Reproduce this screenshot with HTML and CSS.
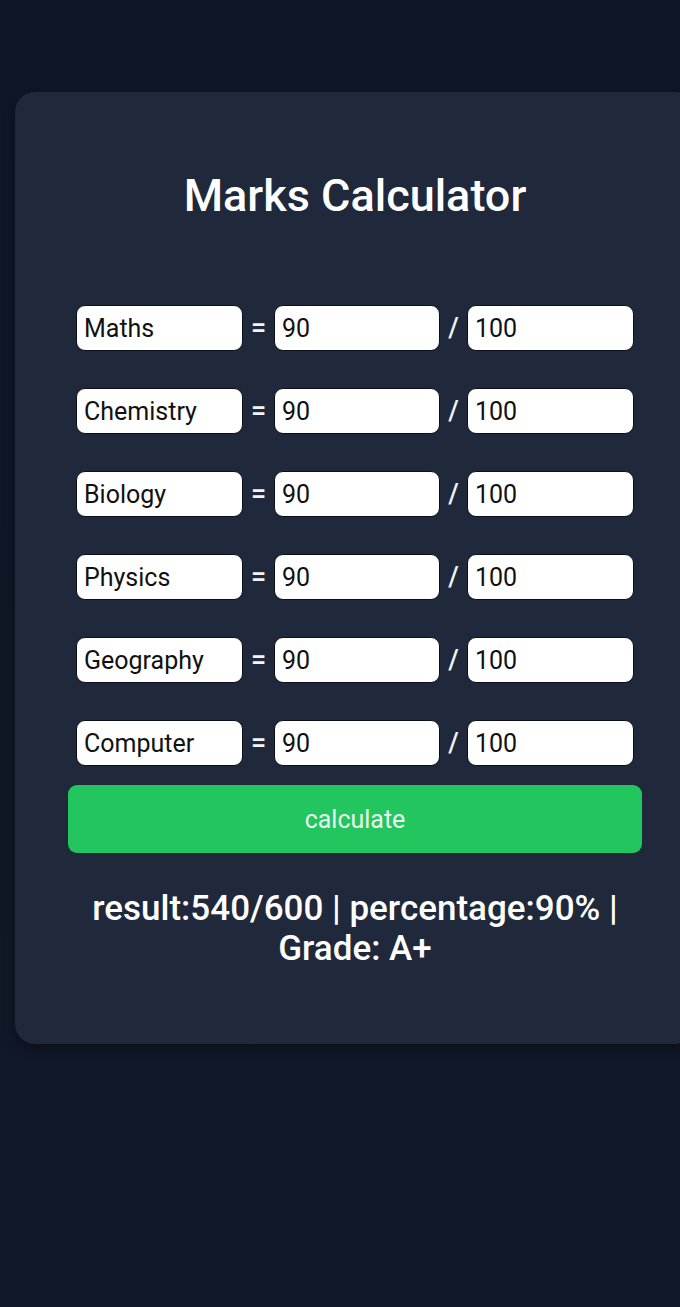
FILE: index.html
```html
<!DOCTYPE html>
<html lang="en">
<head>
<meta charset="utf-8">
<title>Marks Calculator</title>
<link rel="stylesheet" href="styles.css">
</head>
<body>
<main class="card">
  <h1 class="title">Marks Calculator</h1>
  <div class="rows">
    <div class="row"><input class="field" value="Maths"><span class="op">=</span><input class="field" value="90"><span class="op">/</span><input class="field" value="100"></div>
    <div class="row"><input class="field" value="Chemistry"><span class="op">=</span><input class="field" value="90"><span class="op">/</span><input class="field" value="100"></div>
    <div class="row"><input class="field" value="Biology"><span class="op">=</span><input class="field" value="90"><span class="op">/</span><input class="field" value="100"></div>
    <div class="row"><input class="field" value="Physics"><span class="op">=</span><input class="field" value="90"><span class="op">/</span><input class="field" value="100"></div>
    <div class="row"><input class="field" value="Geography"><span class="op">=</span><input class="field" value="90"><span class="op">/</span><input class="field" value="100"></div>
    <div class="row"><input class="field" value="Computer"><span class="op">=</span><input class="field" value="90"><span class="op">/</span><input class="field" value="100"></div>
  </div>
  <button class="calc">calculate</button>
  <p class="result">result:540/600 | percentage:90% | Grade: A+</p>
</main>
</body>
</html>
```

FILE: styles.css
```css
html, body {
  margin: 0;
  padding: 0;
}
body {
  background: linear-gradient(#0f1628, #111827);
  min-height: 1307px;
  overflow: hidden;
  font-family: Roboto, "Liberation Sans", sans-serif;
  padding-top: 92px;
  box-sizing: border-box;
}
.card {
  margin-left: 15px;
  width: 680px;
  box-sizing: border-box;
  background: #1f293b;
  border-radius: 20px;
  padding: 0 53px 0;
  height: 952px;
  box-shadow: 0 4px 12px rgba(0,0,0,0.35);
  display: flex;
  flex-direction: column;
}
.title {
  margin: 0;
  padding-top: 74px;
  font-size: 45px;
  line-height: 60px;
  font-weight: 500;
  color: #ffffff;
  text-align: center;
}
.rows {
  margin: 79px 8px 0;
  display: flex;
  flex-direction: column;
  gap: 37px;
}
.row {
  display: grid;
  grid-template-columns: 167px 31px 166px 27px 167px;
  align-items: center;
  height: 46px;
}
.field {
  height: 46px;
  width: 100%;
  box-sizing: border-box;
  border: 1px solid #0b0f19;
  border-radius: 9px;
  background: #ffffff;
  color: #111111;
  font-family: Roboto, "Liberation Sans", sans-serif;
  font-size: 25px;
  padding: 0 7px;
  outline: none;
}
.op {
  color: #f1f5f9;
  font-size: 27px;
  font-weight: 500;
  text-align: center;
}
.calc {
  margin-top: 19px;
  height: 68px;
  border: none;
  border-radius: 9px;
  background: #22c55e;
  color: #e9f7ee;
  font-family: Roboto, "Liberation Sans", sans-serif;
  font-size: 25px;
}
.result {
  margin: 36px 20px 0;
  color: #ffffff;
  font-size: 35px;
  font-weight: 500;
  line-height: 40px;
  text-align: center;
}
```
